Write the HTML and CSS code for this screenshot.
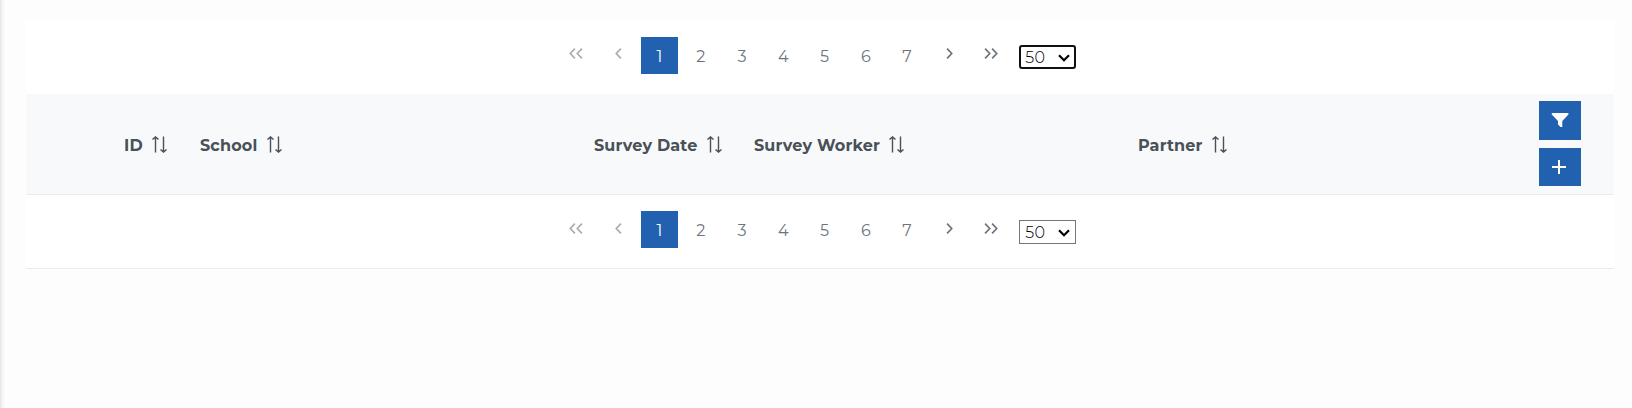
FILE: index.html
```html
<!DOCTYPE html>
<html lang="en">
<head>
<meta charset="utf-8">
<title>Surveys</title>
<link rel="stylesheet" href="styles.css">
</head>
<body>
<svg width="0" height="0" class="defs">
  <symbol id="sort" viewBox="0 0 16 17"><path d="M4.500 16.500V1M1.500 3.500 4.500.900l3 2.600M12.500.5V16M9.500 13.500l3 2.600 3-2.600"/></symbol>
  <symbol id="left" viewBox="0 0 7 11"><path d="M5.900.7 1.300 5.500l4.600 4.800"/></symbol>
  <symbol id="right" viewBox="0 0 7 11"><path d="M1.100.7 5.700 5.500l-4.600 4.800"/></symbol>
  <symbol id="first" viewBox="0 0 14 11"><path d="M5.900.7 1.300 5.500l4.600 4.800M12.900.7 8.300 5.500l4.600 4.800"/></symbol>
  <symbol id="last" viewBox="0 0 14 11"><path d="M1.100.7 5.700 5.500l-4.600 4.800M8.100.7l4.600 4.800-4.600 4.800"/></symbol>
  <symbol id="caret" viewBox="0 0 12 8"><path d="M1 1.300 6 6.200l5-4.900"/></symbol>
</svg>
<main class="card">
  <nav class="paginator">
    <a class="page off to-start"><svg class="double"><use href="#first"/></svg></a>
    <a class="page off"><svg class="single"><use href="#left"/></svg></a>
    <a class="page active">1</a><a class="page">2</a><a class="page">3</a><a class="page">4</a><a class="page">5</a><a class="page">6</a><a class="page">7</a>
    <a class="page forward"><svg class="single"><use href="#right"/></svg></a>
    <a class="page forward"><svg class="double"><use href="#last"/></svg></a>
    <span class="rows focused">50<svg class="caret"><use href="#caret"/></svg></span>
  </nav>
  <header class="head">
    <div class="cell"><span class="label id">ID</span><svg class="sort"><use href="#sort"/></svg></div>
    <div class="cell"><span class="label school">School</span><svg class="sort"><use href="#sort"/></svg></div>
    <div class="cell"><span class="label date">Survey Date</span><svg class="sort"><use href="#sort"/></svg></div>
    <div class="cell"><span class="label worker">Survey Worker</span><svg class="sort"><use href="#sort"/></svg></div>
    <div class="cell"><span class="label partner">Partner</span><svg class="sort"><use href="#sort"/></svg></div>
    <div class="actions">
      <button class="btn filter" aria-label="Filter"><svg width="18" height="16" viewBox="0 0 18 16"><path fill="#fff" d="M.8 1h16.600v1.500L11.300 9v6H9.500L7 12.500V9L.8 2.500z"/></svg></button>
      <button class="btn add" aria-label="Add"><svg width="14" height="14" viewBox="0 0 14 14"><path stroke="#fff" stroke-width="2" d="M7 0v14M0 7h14"/></svg></button>
    </div>
  </header>
  <nav class="paginator bottom">
    <a class="page off to-start"><svg class="double"><use href="#first"/></svg></a>
    <a class="page off"><svg class="single"><use href="#left"/></svg></a>
    <a class="page active">1</a><a class="page">2</a><a class="page">3</a><a class="page">4</a><a class="page">5</a><a class="page">6</a><a class="page">7</a>
    <a class="page forward"><svg class="single"><use href="#right"/></svg></a>
    <a class="page forward"><svg class="double"><use href="#last"/></svg></a>
    <span class="rows">50<svg class="caret"><use href="#caret"/></svg></span>
  </nav>
</main>
</body>
</html>
```
FILE: styles.css
```css
* { box-sizing: border-box; }
body {
  margin: 0;
  height: 408px;
  padding: 20px 18px 0 26px;
  overflow: hidden;
  background: linear-gradient(90deg, #e4e4e4 0, #f3f3f3 2px, #fdfdfd 5px) #fdfdfd;
  color: #495057;
  font-family: Montserrat, Inter, "Open Sans", sans-serif;
  font-size: 16px;
}
svg { display: block; flex: none; fill: none; stroke: currentColor; }
.defs { position: absolute; }
.card { width: 1588px; background: #fff; }
.paginator {
  display: flex;
  gap: 4.25px;
  height: 74px;
  padding: 17px 0 0 532.5px;
}
.bottom { height: 74px; padding-top: 16px; border-bottom: 1px solid #e9ecef; }
.page {
  display: flex;
  align-items: center;
  justify-content: center;
  width: 37px;
  height: 37px;
  padding-top: 1px;
  color: #6c757d;
  font-weight: 400;
}
.page svg { margin-top: -5px; stroke-width: 1.700; }
.bottom .page svg { margin-top: -3px; }
.to-start { padding-right: 2px; }
.forward { padding-left: 2px; }
.off { color: #a9adb1; }
.active { background: #2161b0; color: #fff; }
.single { width: 7px; height: 11px; }
.double { width: 14px; height: 11px; }
.rows {
  display: flex;
  align-items: center;
  justify-content: space-between;
  width: 57px;
  height: 24px;
  margin: 8px 0 0 6.500px;
  padding: 0 5px 0 5.500px;
  border: 1px solid #767676;
  background: #fff;
  color: #000;
  font-weight: 300;
  letter-spacing: .3px;
}
.bottom .rows { margin-top: 9px; }
.focused { border: 2px solid #101010; border-radius: 3px; padding: 0 4px 0 4.500px; }
.caret { width: 12px; height: 8px; margin-top: 2px; stroke-width: 2.200; }
.head {
  display: grid;
  grid-template-columns: 75px 394px 160px 384px 401px 42px;
  height: 101px;
  padding-left: 99px;
  background: #f8f9fb;
  border-bottom: 1px solid #e9ecef;
}
.cell { display: flex; align-items: center; gap: 8px; }
.label { font-weight: 700; letter-spacing: .15px; white-space: nowrap; padding-top: 2px; }
.id { width: 19px; margin-left: -1px; }
.school { width: 58px; }
.date { width: 104px; }
.worker { width: 126px; }
.partner { width: 65px; }
.sort { width: 16px; height: 17px; stroke-width: 1.400; }
.actions { display: flex; flex-direction: column; gap: 8px; padding-top: 7px; }
.btn {
  display: flex;
  align-items: center;
  justify-content: center;
  width: 42px;
  height: 39px;
  padding: 0;
  border: 0;
  background: #2161b0;
}
.filter { padding-bottom: 1px; }
.add { height: 38px; padding-right: 2px; }
.btn svg { stroke: none; }
```
